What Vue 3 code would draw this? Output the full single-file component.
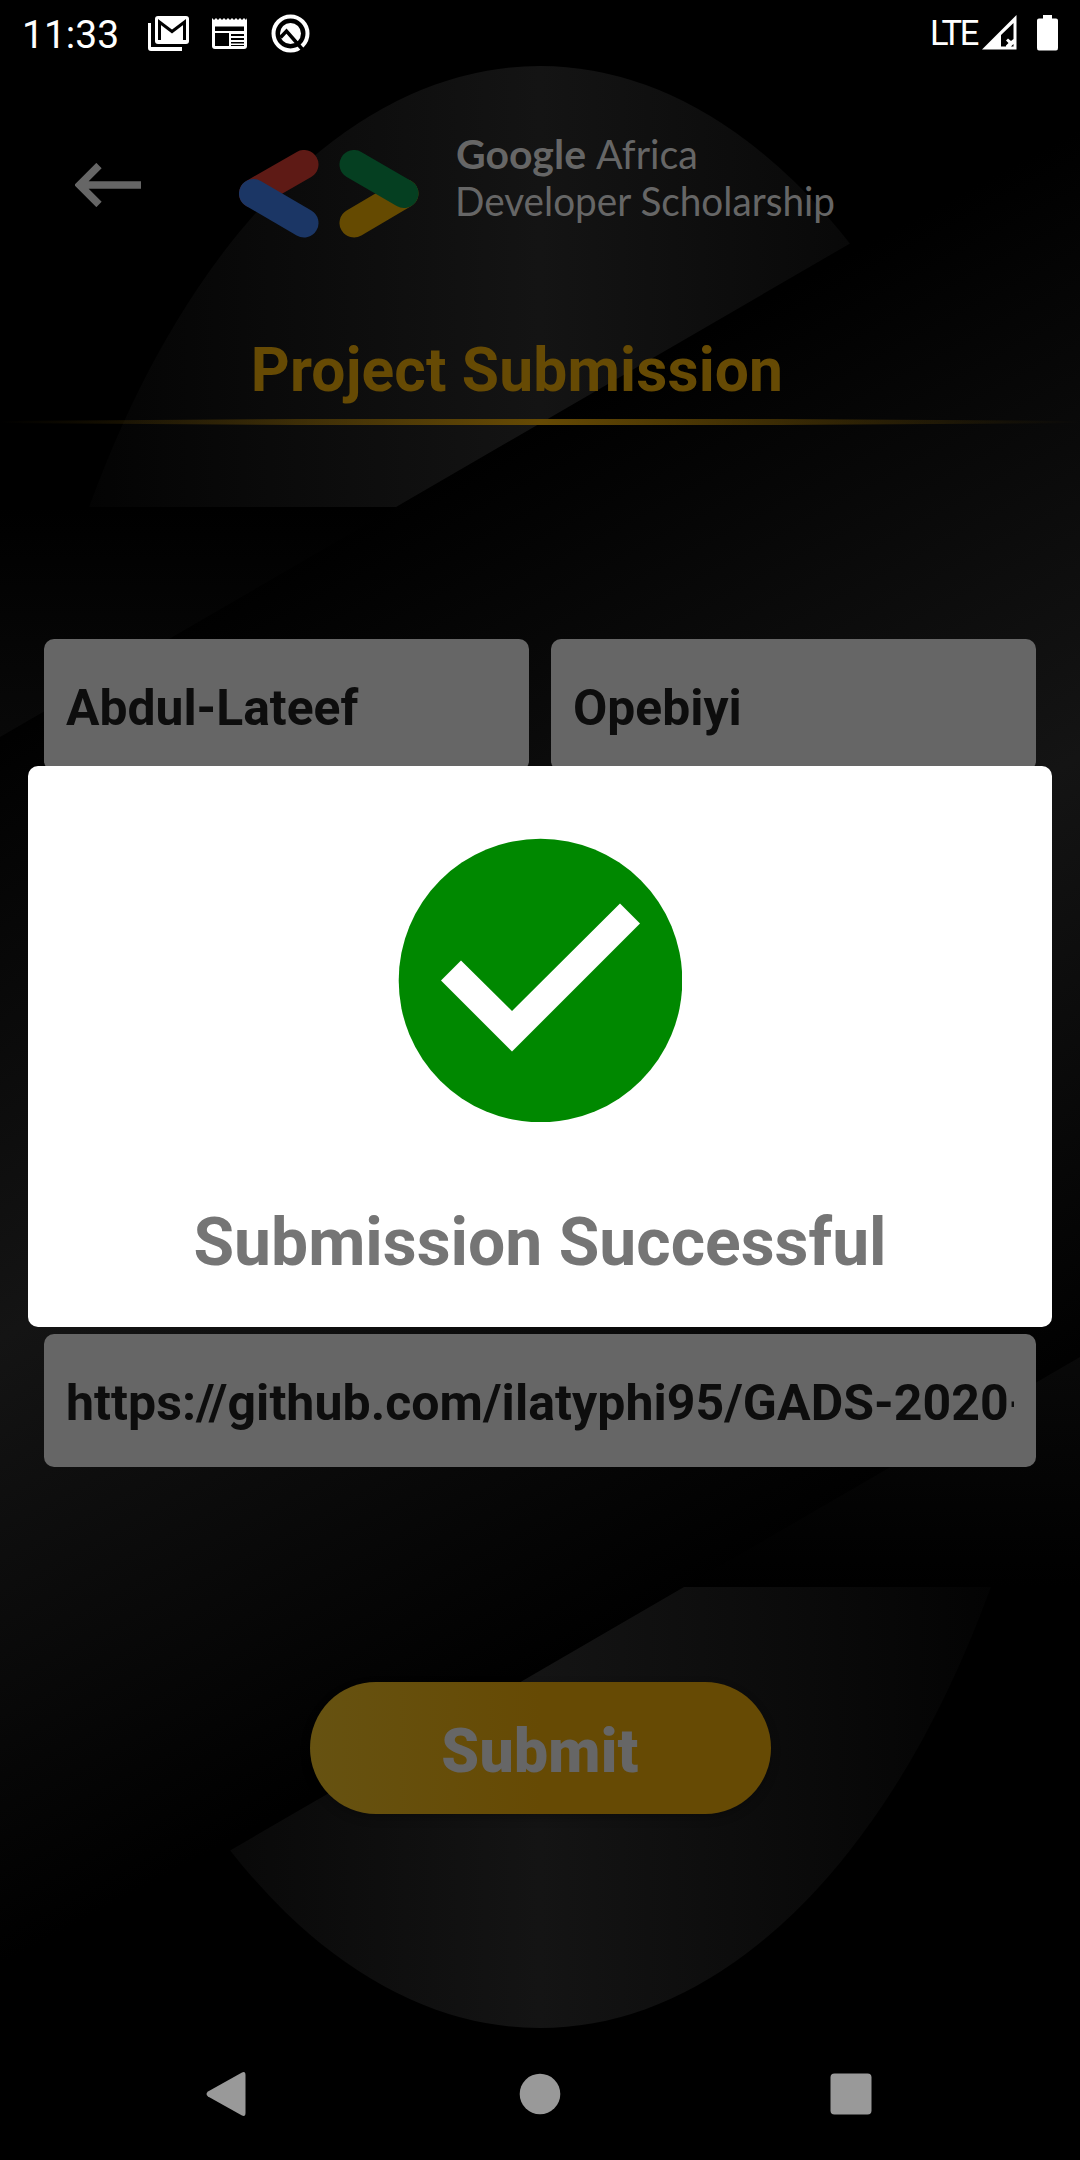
<script setup>
const names = ['Abdul-Lateef', 'Opebiyi']
const link = 'https://github.com/ilatyphi95/GADS-2020-Practice'
</script>

<template>
  <div class="screen">
    <svg class="backdrop" width="1080" height="2160" viewBox="0 0 1080 2160" aria-hidden="true">
      <defs>
        <linearGradient id="gx" gradientUnits="userSpaceOnUse" x1="0" y1="0" x2="1080" y2="0">
          <stop offset="0" stop-color="#000" /><stop offset=".5" stop-color="#141414" /><stop offset="1" stop-color="#000" />
        </linearGradient>
        <linearGradient id="gy" gradientUnits="userSpaceOnUse" x1="0" y1="507" x2="0" y2="1587">
          <stop offset="0" stop-color="#000" /><stop offset=".5" stop-color="#141414" /><stop offset="1" stop-color="#000" />
        </linearGradient>
        <linearGradient id="gd" gradientUnits="userSpaceOnUse" x1="278" y1="561" x2="802" y2="1533">
          <stop offset="0" stop-color="#000" /><stop offset=".5" stop-color="#141414" /><stop offset="1" stop-color="#000" />
        </linearGradient>
        <clipPath id="caps"><path d="M0 66H1080V110L396 507H0ZM1080 2028H0V1984L684 1587H1080Z" /></clipPath>
      </defs>
      <rect width="1080" height="2160" fill="#000" />
      <rect y="507" width="1080" height="1080" fill="url(#gy)" />
      <path d="M0 737L1080 110V1357L0 1984Z" fill="url(#gd)" />
      <ellipse cx="540" cy="1047" rx="540" ry="981" fill="url(#gx)" clip-path="url(#caps)" />
    </svg>

    <header class="status">
      <span class="clock">11:33</span>
      <svg class="s-mail" width="42" height="36" viewBox="0 0 42 36">
        <path d="M0 7H3V31H34V35H3Q0 35 0 32Z" fill="#fff" />
        <rect x="7" y="0" width="34" height="28" rx="3" fill="#fff" />
        <path d="M11.500 24V6L24 15.500L36.500 6V24" fill="none" stroke="#000" stroke-width="3" />
      </svg>
      <svg class="s-news" width="35" height="32" viewBox="0 0 35 32">
        <path d="M0 0L2 2L4 0L6 2L8 0L10 2L12 0L14 2L16 0L18 2L20 0L22 2L24 0L26 2L28 0L30 2L32 0L34 2L35 0V28Q35 31 32 31H3Q0 31 0 28Z" fill="#fff" />
        <path d="M3 8.500H32V13H3ZM3 15H17V28H3ZM19 16H32V18H19ZM19 20H32V22H19ZM19 24H32V25.500H19ZM19 27H32V28H19Z" fill="#000" />
      </svg>
      <svg class="s-q" width="40" height="40" viewBox="0 0 40 40">
        <circle cx="19.500" cy="19.500" r="17" fill="none" stroke="#fff" stroke-width="4" />
        <circle cx="19.500" cy="19.500" r="10.500" fill="#fff" />
        <path d="M9.500 23.500L15.500 17L32 36" fill="none" stroke="#000" stroke-width="3.500" />
      </svg>
      <span class="lte">LTE</span>
      <svg class="s-signal" width="35" height="35" viewBox="0 0 35 35">
        <path d="M0 34.500L34.500 0V34.500Z" fill="#fff" />
        <path d="M19 20L31.500 8V24L29 26L26 23.500L24 25.500L26.500 28L24 30.500V31.500H19Z" fill="#000" />
        <path d="M29 31.500L31.500 29V31.500Z" fill="#000" />
      </svg>
      <svg class="s-battery" width="21" height="36" viewBox="0 0 21 36">
        <path d="M6 0H15V3.500H19Q21 3.500 21 5.500V33Q21 35.500 19 35.500H2Q0 35.500 0 33V5.500Q0 3.500 2 3.500H6Z" fill="#fff" />
      </svg>
    </header>

    <section class="brand">
      <svg class="back" width="66" height="44" viewBox="0 0 66 44">
        <path d="M66 22H6M24 2.500L4.500 22L24 41.500" fill="none" stroke="#666" stroke-width="7.500" />
      </svg>
      <svg class="logo" width="180" height="88" viewBox="0 0 180 88">
        <g fill="none" stroke-width="29" stroke-linecap="round">
          <path d="M65 14.500L14.500 43.500" stroke="#5e1a15" />
          <path d="M14.500 43.500L65 73" stroke="#1b3665" />
          <path d="M165 43.500L115 73" stroke="#654a01" />
          <path d="M115 14.500L165 43.500" stroke="#053f21" />
        </g>
      </svg>
      <div class="wordmark">
        <svg width="390" height="100" viewBox="0 0 390 100">
          <text x="0" y="41" textLength="130" lengthAdjust="spacingAndGlyphs" font-weight="700">Google</text>
          <text x="140" y="41" textLength="102" lengthAdjust="spacingAndGlyphs">Africa</text>
          <text x="-1" y="88" textLength="380" lengthAdjust="spacingAndGlyphs">Developer Scholarship</text>
        </svg>
      </div>
    </section>

    <h1 class="title">Project Submission</h1>
    <svg class="rule" width="1080" height="6" viewBox="0 0 1080 6">
      <defs>
        <linearGradient id="gold">
          <stop offset="0" stop-color="#664a04" stop-opacity="0" /><stop offset=".5" stop-color="#664a04" /><stop offset="1" stop-color="#664a04" stop-opacity="0" />
        </linearGradient>
      </defs>
      <path d="M0 2L300 0H780L1080 2V4L780 6H300L0 4Z" fill="url(#gold)" />
    </svg>

    <main class="form">
      <div class="row">
        <div v-for="n in names" :key="n" class="field">{{ n }}</div>
      </div>
      <div class="field link"><span>{{ link }}</span></div>
    </main>
    <button class="submit">Submit</button>

    <nav class="nav">
      <svg width="40" height="46" viewBox="0 0 40 46"><path d="M2 20.500L36 1.500Q39.500 0 39.500 4V42Q39.500 46 36 44.500L2 25.500Q-1 23 2 20.500Z" fill="#999" /></svg>
      <svg class="home" width="42" height="42" viewBox="0 0 42 42"><circle cx="21" cy="21" r="20.300" fill="#999" /></svg>
      <svg width="42" height="42" viewBox="0 0 42 42"><rect x=".5" y=".5" width="41" height="41" rx="4" fill="#999" /></svg>
    </nav>

    <div class="dialog" role="dialog">
      <svg width="284" height="284" viewBox="0 0 284 284">
        <circle cx="142.500" cy="142.500" r="141.800" fill="#008800" />
        <path d="M43 142.500L63 122.500L114 173L222 65.500L242 85.500L114 213.500Z" fill="#fff" />
      </svg>
      <p>Submission Successful</p>
    </div>
  </div>
</template>

<style>
body { margin: 0; background: #000; }
</style>

<style scoped>
.screen {
  position: relative;
  display: flex;
  flex-direction: column;
  width: 1080px;
  height: 2160px;
  overflow: hidden;
  font-family: Roboto, sans-serif;
}
.screen > * { position: relative; box-sizing: border-box; flex: none; }
svg { display: block; flex: none; }
.screen > .backdrop { position: absolute; inset: 0; }
.status { display: flex; height: 66px; padding-left: 22px; color: #fff; }
.clock { width: 126px; font-size: 39px; line-height: 70px; white-space: nowrap; }
.s-mail { margin-top: 16px; }
.s-news { margin: 18px 0 0 22px; }
.s-q { margin: 14px 0 0 24px; }
.lte { margin-left: 619px; width: 52px; font-size: 34.5px; line-height: 66px; letter-spacing: -2.4px; white-space: nowrap; }
.s-signal { margin-top: 15px; }
.s-battery { margin: 15px 0 0 20px; }
.brand { display: flex; height: 194px; }
.back { margin: 97px 0 0 75px; }
.logo { margin: 84px 0 0 98px; }
.wordmark { margin: 62px 0 0 37px; }
.wordmark svg { overflow: visible; }
.wordmark text { font-family: Lato, sans-serif; font-size: 40px; fill: #666; }
.title { margin: 0; height: 159px; padding: 73px 46px 0 0; font-size: 60.5px; line-height: 75px; font-weight: 700; letter-spacing: 0.15px; text-align: center; color: #664a04; white-space: nowrap; }
.form { display: flex; flex-direction: column; justify-content: space-between; height: 828px; margin: 214px 44px 0; }
.row { display: flex; gap: 22px; }
.field { box-sizing: border-box; flex: 1; height: 132px; padding: 0 22px; border-radius: 10px; background: #666; color: #0d0d0d; font-size: 49.8px; line-height: 138px; font-weight: 700; }
.link { flex: none; height: 133px; overflow: hidden; font-size: 50px; letter-spacing: 0.06px; }
.link span { display: block; overflow: hidden; white-space: nowrap; }
.submit { align-self: center; width: 461px; height: 132px; margin-top: 215px; padding: 7px 0 0; border: 0; border-radius: 66px; background: linear-gradient(90deg, #665211, #664a04 50%); color: #666; font: 900 60.5px/125px Roboto, sans-serif; letter-spacing: 0.3px; box-shadow: 0 4px 10px rgba(0, 0, 0, 0.25); }
.nav { display: flex; align-items: center; justify-content: space-between; height: 132px; margin-top: 214px; padding: 0 208px 0 206px; }
.home { margin-left: 4px; }
.screen > .dialog { position: absolute; left: 28px; top: 766px; width: 1024px; height: 561px; padding-top: 72px; border-radius: 10px; background: #fff; display: flex; flex-direction: column; align-items: center; }
.dialog p { margin: 82px 0 0; font-size: 66px; line-height: 77px; font-weight: 700; color: #757575; white-space: nowrap; }
</style>
